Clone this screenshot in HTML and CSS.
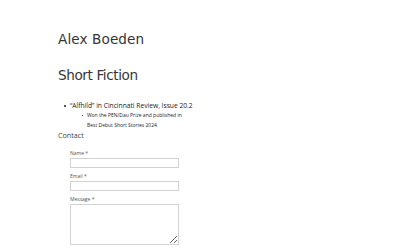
FILE: index.html
```html
<!DOCTYPE html>
<html>
<head>
<meta charset="utf-8">
<link rel="stylesheet" href="styles.css">
</head>
<body>
<main class="page">
  <h1 class="title">Alex Boeden</h1>
  <h2 class="section">Short Fiction</h2>
  <ul class="works">
    <li class="work">“Alfhild” in Cincinnati Review, Issue 20.2
      <ul class="notes">
        <li class="note">Won the PEN/Dau Prize and published in Best Debut Short Stories 2024</li>
      </ul>
    </li>
  </ul>
  <h3 class="contact">Contact</h3>
  <form class="form">
    <label class="field"><span class="label">Name *</span><input class="input" type="text"></label>
    <label class="field"><span class="label">Email *</span><input class="input" type="email"></label>
    <label class="field"><span class="label">Message *</span><textarea class="textarea"></textarea></label>
  </form>
</main>
</body>
</html>
```

FILE: styles.css
```css
html, body {
  margin: 0;
  padding: 0;
  background: #ffffff;
}
.page {
  padding: 30px 0 0 58px;
  color: #333333;
  font-family: "Open Sans", "Liberation Sans", sans-serif;
}
.title, .section {
  font-family: "DejaVu Sans", sans-serif;
  font-weight: 400;
  font-size: 13.6px;
  letter-spacing: 0.1px;
  line-height: 18px;
  margin: 0;
  color: #353535;
}
.section {
  margin-top: 17.5px;
  letter-spacing: -0.4px;
}
.works, .notes {
  list-style: none;
  margin: 0;
}
.works {
  margin-top: 17.5px;
  padding-left: 12px;
  font-size: 6.7px;
  line-height: 10px;
  color: #222;
}
.notes {
  padding-left: 17px;
  width: 100px;
  font-size: 5px;
  line-height: 9.5px;
}
.work::before, .note::before {
  content: "";
  display: inline-block;
  width: 1.8px;
  height: 1.8px;
  border-radius: 50%;
  background: #222;
  margin-left: -5.8px;
  margin-right: 4px;
  vertical-align: middle;
}
.note::before {
  width: 1.5px;
  height: 1.5px;
  margin-left: -5.5px;
}
.contact {
  margin: 0;
  font-weight: 400;
  font-size: 7.2px;
  line-height: 10px;
  color: #444;
}
.form {
  display: flex;
  flex-direction: column;
  gap: 5px;
  padding: 9.5px 0 0 12px;
  width: 109px;
}
.field {
  display: flex;
  flex-direction: column;
  gap: 1px;
}
.label {
  font-size: 5px;
  line-height: 7px;
  color: #555;
}
.input, .textarea {
  box-sizing: border-box;
  width: 109px;
  height: 10px;
  margin: 0;
  border: 1px solid #d2d2d2;
  border-radius: 0;
  padding: 0;
  background: #fff;
}
.textarea {
  height: 41px;
  resize: vertical;
}
```
